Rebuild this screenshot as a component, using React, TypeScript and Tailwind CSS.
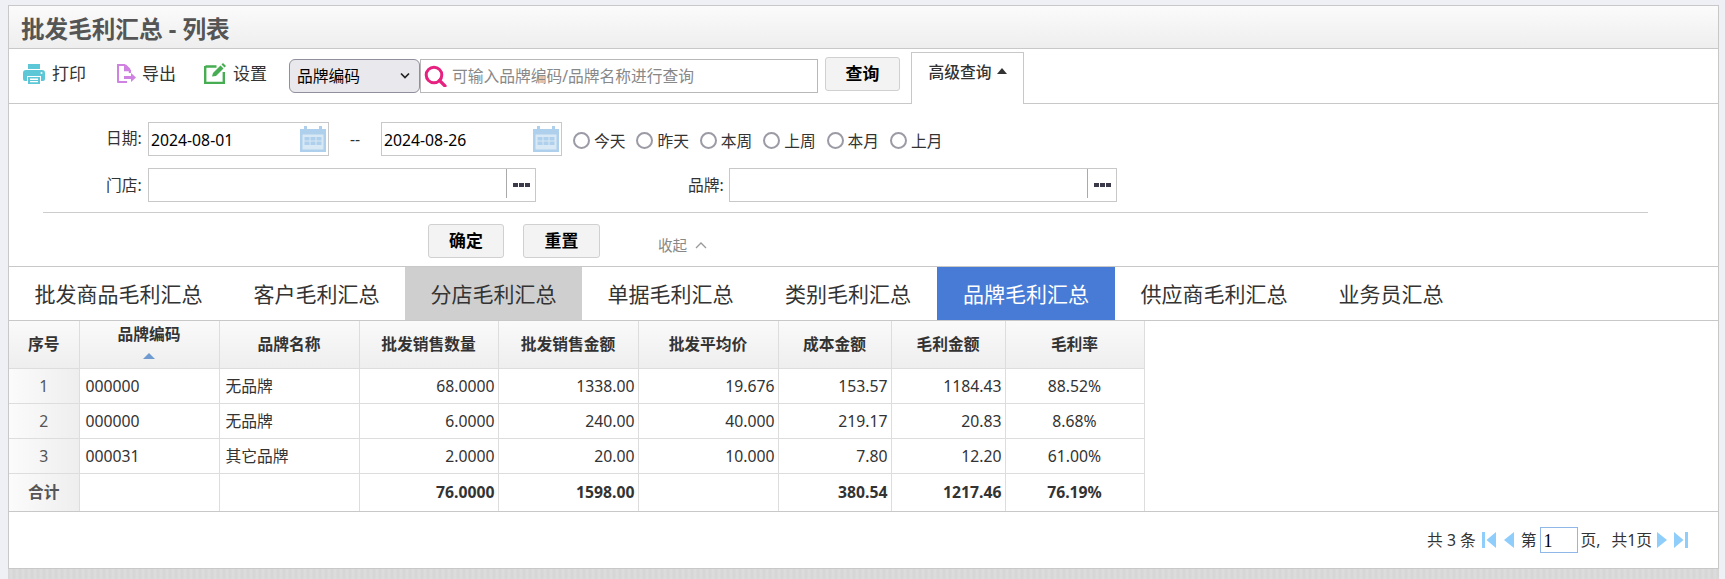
import React from "react";

const font = { fontFamily: '"Microsoft YaHei","Noto Sans","Noto Sans CJK SC",sans-serif' };

function Printer() {
  return (
    <svg width="22" height="21" viewBox="0 0 22 21" className="shrink-0">
      <path d="M5 1h12v5H5z" fill="#5cc8d7" />
      <path d="M3 7h16a3 3 0 0 1 3 3v6a2 2 0 0 1-2 2h-2v-5H4v5H2a2 2 0 0 1-2-2v-6a3 3 0 0 1 3-3z" fill="#5cc8d7" />
      <path d="M5 14h12v7H5z" fill="#5cc8d7" />
      <path d="M7 15.5h8v1.6H7zM7 18h8v1.2H7z" fill="#fff" />
      <circle cx="18.5" cy="10" r="1" fill="#fff" />
    </svg>
  );
}
function Exporter() {
  return (
    <svg width="22" height="21" viewBox="0 0 22 21" className="shrink-0">
      <path d="M2 1h8l6 6v3h-2.2V8.2H9V3H4v15h8v2H3a1 1 0 0 1-1-1z" fill="#cf82e2" />
      <path d="M11 1.5 15.5 6H11z" fill="#cf82e2" />
      <path d="M9 13h7v-3l5 4.5-5 4.5v-3H9z" fill="#cf82e2" />
    </svg>
  );
}
function Setting() {
  return (
    <svg width="22" height="21" viewBox="0 0 22 21" className="shrink-0">
      <path d="M1.5 3.5h11M1.2 3v17h18.6V9" fill="none" stroke="#47ad52" strokeWidth="2.4" />
      <path d="M8 13.5 9 10l7.5-7.5 3 3L12 13z" fill="#47ad52" />
      <path d="M17.5 1.5 19 0l3 3-1.5 1.5z" fill="#47ad52" />
    </svg>
  );
}
function Search() {
  return (
    <svg width="23" height="22" viewBox="0 0 23 22" className="shrink-0">
      <circle cx="10" cy="10" r="7.8" fill="none" stroke="#e7217f" strokeWidth="3" />
      <path d="m15.5 15.5 5.5 5.5" stroke="#e7217f" strokeWidth="3.2" strokeLinecap="round" />
    </svg>
  );
}
function Calendar() {
  return (
    <svg width="26" height="26" viewBox="0 0 26 26" className="shrink-0">
      <path d="M0 3h4V0h3v3h12V0h3v3h4v23H0z" fill="#aed0ec" />
      <path d="M2.5 8.5h21v15h-21z" fill="#d9e8f5" />
      <path d="M4.5 11h5v3.4h-5zM10.5 11h5v3.4h-5zM16.5 11h5v3.4h-5zM4.5 15.6h5V19h-5zM10.5 15.6h5V19h-5zM16.5 15.6h5V19h-5z" fill="#aed0ec" />
    </svg>
  );
}
function Dots() {
  return (
    <span className="flex gap-[1px]">
      <span className="h-[4px] w-[5px] bg-[#3a3a4a]" />
      <span className="h-[4px] w-[5px] bg-[#3a3a4a]" />
      <span className="h-[4px] w-[5px] bg-[#3a3a4a]" />
    </span>
  );
}

function DateBox({ value }: { value: string }) {
  return (
    <div className="flex h-[34px] w-[181px] items-center justify-between border border-[#c8c8c8] bg-white pl-[2px] pr-[2px]">
      <span className="pt-[2px] text-[15.75px] leading-[20px] text-black">{value}</span>
      <Calendar />
    </div>
  );
}

function PickBox({ width }: { width: string }) {
  return (
    <div className={`flex h-[34px] ${width} items-stretch border border-[#c8c8c8] bg-white`}>
      <div className="flex-1" />
      <div className="mb-[3px] flex w-[29px] items-center justify-center border-l border-[#aaa] pt-[3px]">
        <Dots />
      </div>
    </div>
  );
}

function Radio({ label }: { label: string }) {
  return (
    <label className="flex w-[63.4px] items-center gap-[4px] pt-[3px] text-[15.75px] leading-[20px] text-[#333]">
      <span className="h-[17px] w-[17px] shrink-0 rounded-full border-2 border-[#9b9ba6] bg-white" />
      {label}
    </label>
  );
}

function Action({ label, extra }: { label: string; extra: string }) {
  return (
    <button className={`flex h-[34px] items-center justify-center rounded-[3px] border border-[#d0d0d0] bg-[#f3f3f3] text-[16.9px] font-bold leading-[20px] text-black ${extra}`}>
      {label}
    </button>
  );
}

const tabs = [
  { t: "批发商品毛利汇总", c: "w-[219px] text-[#333]" },
  { t: "客户毛利汇总", c: "w-[177px] text-[#333]" },
  { t: "分店毛利汇总", c: "w-[177px] bg-[#cfcfcf] text-[#333]" },
  { t: "单据毛利汇总", c: "w-[177px] text-[#333]" },
  { t: "类别毛利汇总", c: "w-[178px] text-[#333]" },
  { t: "品牌毛利汇总", c: "w-[178px] bg-[#477bd6] text-white" },
  { t: "供应商毛利汇总", c: "w-[198px] text-[#333]" },
  { t: "业务员汇总", c: "w-[156px] text-[#333]" },
];

const widths = [70, 140, 140, 139, 140, 140, 113, 114, 139];
const heads = ["序号", "品牌编码", "品牌名称", "批发销售数量", "批发销售金额", "批发平均价", "成本金额", "毛利金额", "毛利率"];
const rows = [
  ["1", "000000", "无品牌", "68.0000", "1338.00", "19.676", "153.57", "1184.43", "88.52%"],
  ["2", "000000", "无品牌", "6.0000", "240.00", "40.000", "219.17", "20.83", "8.68%"],
  ["3", "000031", "其它品牌", "2.0000", "20.00", "10.000", "7.80", "12.20", "61.00%"],
];
const total = ["合计", "", "", "76.0000", "1598.00", "", "380.54", "1217.46", "76.19%"];

function align(i: number) {
  if (i === 0) return "text-center";
  if (i === 1 || i === 2) return "text-left pl-[6px]";
  if (i === 8) return "text-center";
  return "text-right pr-[3px]";
}

function PageArrow({ dir, bar }: { dir: "l" | "r"; bar?: boolean }) {
  return (
    <svg width="14" height="16" viewBox="0 0 14 16" className="shrink-0">
      {dir === "l" ? (
        <>
          {bar && <path d="M0 0h3v16H0z" fill="#8fcdfa" />}
          <path d={bar ? "M14 0v16L4.5 8z" : "M12 0v16L2 8z"} fill="#8fcdfa" />
        </>
      ) : (
        <>
          {bar && <path d="M11 0h3v16h-3z" fill="#8fcdfa" />}
          <path d={bar ? "M0 0v16l9.5-8z" : "M2 0v16l10-8z"} fill="#8fcdfa" />
        </>
      )}
    </svg>
  );
}

export default function App() {
  return (
    <div style={font} className="flex h-[579px] w-[1725px] flex-col overflow-hidden bg-[#eef0f5] pl-[8px] pr-[6px] pt-[5px]">
      <div className="flex h-[564px] w-[1711px] shrink-0 flex-col border border-[#c8c8c8] bg-white">
        {/* Title */}
        <div className="flex h-[43px] items-center border-b border-[#c8c8c8] bg-gradient-to-b from-[#fbfbfb] to-[#eeeeee] pl-[12px] pt-[3px]">
          <h1 className="text-[23.6px] font-bold leading-[30px] text-[#555]">批发毛利汇总 - 列表</h1>
        </div>

        {/* Toolbar */}
        <div className="flex h-[55px] items-center border-b border-[#c8c8c8] pl-[14px]">
          <span className="-translate-y-[3px]"><Printer /></span>
          <span className="ml-[7px] -translate-y-[2px] text-[17px] leading-[20px] text-[#333]">打印</span>
          <span className="ml-[29px] -translate-y-[3px]"><Exporter /></span>
          <span className="ml-[5px] -translate-y-[2px] text-[17px] leading-[20px] text-[#333]">导出</span>
          <span className="ml-[28px] -translate-y-[3px]"><Setting /></span>
          <span className="ml-[7px] -translate-y-[2px] text-[17px] leading-[20px] text-[#333]">设置</span>
          <div className="relative ml-[22px] h-[34px] w-[131px]">
            <select className="h-full w-full appearance-none rounded-[6px] border border-[#8f8f9d] bg-[#e9e9ed] pl-[7px] pt-[2px] text-[15.75px] text-black outline-none">
              <option>品牌编码</option>
            </select>
            <svg width="12" height="8" viewBox="0 0 12 8" className="pointer-events-none absolute right-[9px] top-[13px]">
              <path d="m2 1.5 4 4 4-4" fill="none" stroke="#222" strokeWidth="1.7" />
            </svg>
          </div>
          <div className="flex h-[34px] w-[398px] items-center border border-[#b8b8b8] pl-[3px]">
            <Search />
            <input
              className="ml-[5px] w-[350px] bg-transparent text-[15.75px] leading-[20px] text-[#333] outline-none placeholder:text-[#888]"
              placeholder="可输入品牌编码/品牌名称进行查询"
            />
          </div>
          <Action label="查询" extra="ml-[7px] w-[75px] -translate-y-[2px]" />
          <div className="relative z-10 -mb-[1px] ml-[11px] flex h-[52px] w-[113px] items-start justify-center self-end border-x border-t border-[#c8c8c8] bg-white pt-[9px] text-[15.75px] font-medium leading-[20px] text-[#333]">
            <span>高级查询</span>
            <svg width="10" height="6" viewBox="0 0 10 6" className="ml-[5px] mt-[6px]"><path d="M5 0l5 6H0z" fill="#333" /></svg>
          </div>
        </div>

        {/* Filters */}
        <div className="flex flex-col pt-[18px]">
          <div className="flex h-[34px] items-center pl-[97px] text-[15.75px] leading-[20px] text-[#333]">
            <span className="-translate-y-[1px] w-[42px]">日期:</span>
            <DateBox value="2024-08-01" />
            <span className="w-[52px] text-center">--</span>
            <DateBox value="2024-08-26" />
            <div className="ml-[11px] flex">
              {["今天", "昨天", "本周", "上周", "本月", "上月"].map((l) => (
                <Radio key={l} label={l} />
              ))}
            </div>
          </div>
          <div className="mt-[12px] flex h-[34px] items-center pl-[97px] text-[15.75px] leading-[20px] text-[#333]">
            <span className="w-[42px]">门店:</span>
            <PickBox width="w-[388px]" />
            <span className="ml-[152px] w-[41px]">品牌:</span>
            <PickBox width="w-[388px]" />
          </div>
          <div className="ml-[34px] mt-[10px] h-px w-[1605px] bg-[#cccccc]" />
          <div className="mt-[11px] flex h-[34px] items-center pl-[419px]">
            <Action label="确定" extra="w-[76px]" />
            <Action label="重置" extra="ml-[19px] w-[77px]" />
            <span className="ml-[58px] mt-[8px] flex items-center gap-[8px] text-[14.6px] leading-[20px] text-[#888]">
              收起
              <svg width="12" height="7" viewBox="0 0 12 7"><path d="m1 6 5-5 5 5" fill="none" stroke="#999" strokeWidth="1.3" /></svg>
            </span>
          </div>
        </div>

        {/* Tabs */}
        <div className="mt-[8px] flex h-[55px] border-y border-[#c8c8c8]">
          {tabs.map((t) => (
            <div key={t.t} className={`flex items-center justify-center text-[21px] leading-[28px] ${t.c}`}>
              {t.t}
            </div>
          ))}
        </div>

        {/* Table */}
        <div className="h-[191px] border-b border-[#c8c8c8]">
          <table className="table-fixed border-collapse text-[15.75px] leading-[20px] text-[#333]" style={{ width: 1135 }}>
            <colgroup>
              {widths.map((w, i) => (
                <col key={i} style={{ width: w }} />
              ))}
            </colgroup>
            <thead>
              <tr className="h-[47px] bg-gradient-to-b from-[#fafafa] to-[#eeeeee]">
                {heads.map((h, i) => (
                  <th key={h} className="border-r border-b border-[#dddddd] p-0 text-center align-middle font-semibold">
                    {i === 1 ? (
                      <div className="flex flex-col items-center">
                        <span className="-mt-[6px]">{h}</span>
                        <svg width="12" height="6" viewBox="0 0 12 6" className="mt-[9px]"><path d="M6 0l6 6H0z" fill="#6f9bd1" /></svg>
                      </div>
                    ) : (
                      h
                    )}
                  </th>
                ))}
              </tr>
            </thead>
            <tbody>
              {rows.map((r) => (
                <tr key={r[0]} className="h-[35px]">
                  {r.map((c, i) => (
                    <td
                      key={i}
                      className={`border-r border-b border-[#dddddd] p-0 pt-[1px] ${align(i)} ${i === 0 ? "bg-gradient-to-r from-[#fbfbfb] to-[#eeeeee] text-[#555]" : ""}`}
                    >
                      {c}
                    </td>
                  ))}
                </tr>
              ))}
              <tr className="h-[38px] font-bold">
                {total.map((c, i) => (
                  <td
                    key={i}
                    className={`border-r border-[#dddddd] p-0 ${align(i)} ${i === 0 ? "bg-gradient-to-r from-[#fbfbfb] to-[#eeeeee] font-semibold text-[#555]" : ""}`}
                  >
                    {c}
                  </td>
                ))}
              </tr>
            </tbody>
          </table>
        </div>

        {/* Pagination */}
        <div className="flex flex-1 items-center justify-end pr-[30px] text-[15.75px] leading-[20px] text-[#333]">
          <span>共 3 条</span>
          <span className="ml-[6px]"><PageArrow dir="l" bar /></span>
          <span className="ml-[6px]"><PageArrow dir="l" /></span>
          <span className="ml-[5px]">第</span>
          <input
            defaultValue="1"
            className="ml-[3px] h-[26px] w-[38px] border border-[#8fb8e8] pl-[3px] pt-[3px] text-[18px] text-black outline-none"
            style={{ fontFamily: '"Liberation Serif",serif' }}
          />
          <span className="ml-[3px]">页,</span>
          <span className="ml-[11px]">共1页</span>
          <span className="ml-[3px]"><PageArrow dir="r" /></span>
          <span className="ml-[5px]"><PageArrow dir="r" bar /></span>
        </div>
      </div>
      <div className="h-[11px] w-[1711px] shrink-0 bg-[repeating-linear-gradient(90deg,#d5d5d5_0px,#dddddd_3px,#d5d5d5_6px)]" />
    </div>
  );
}
